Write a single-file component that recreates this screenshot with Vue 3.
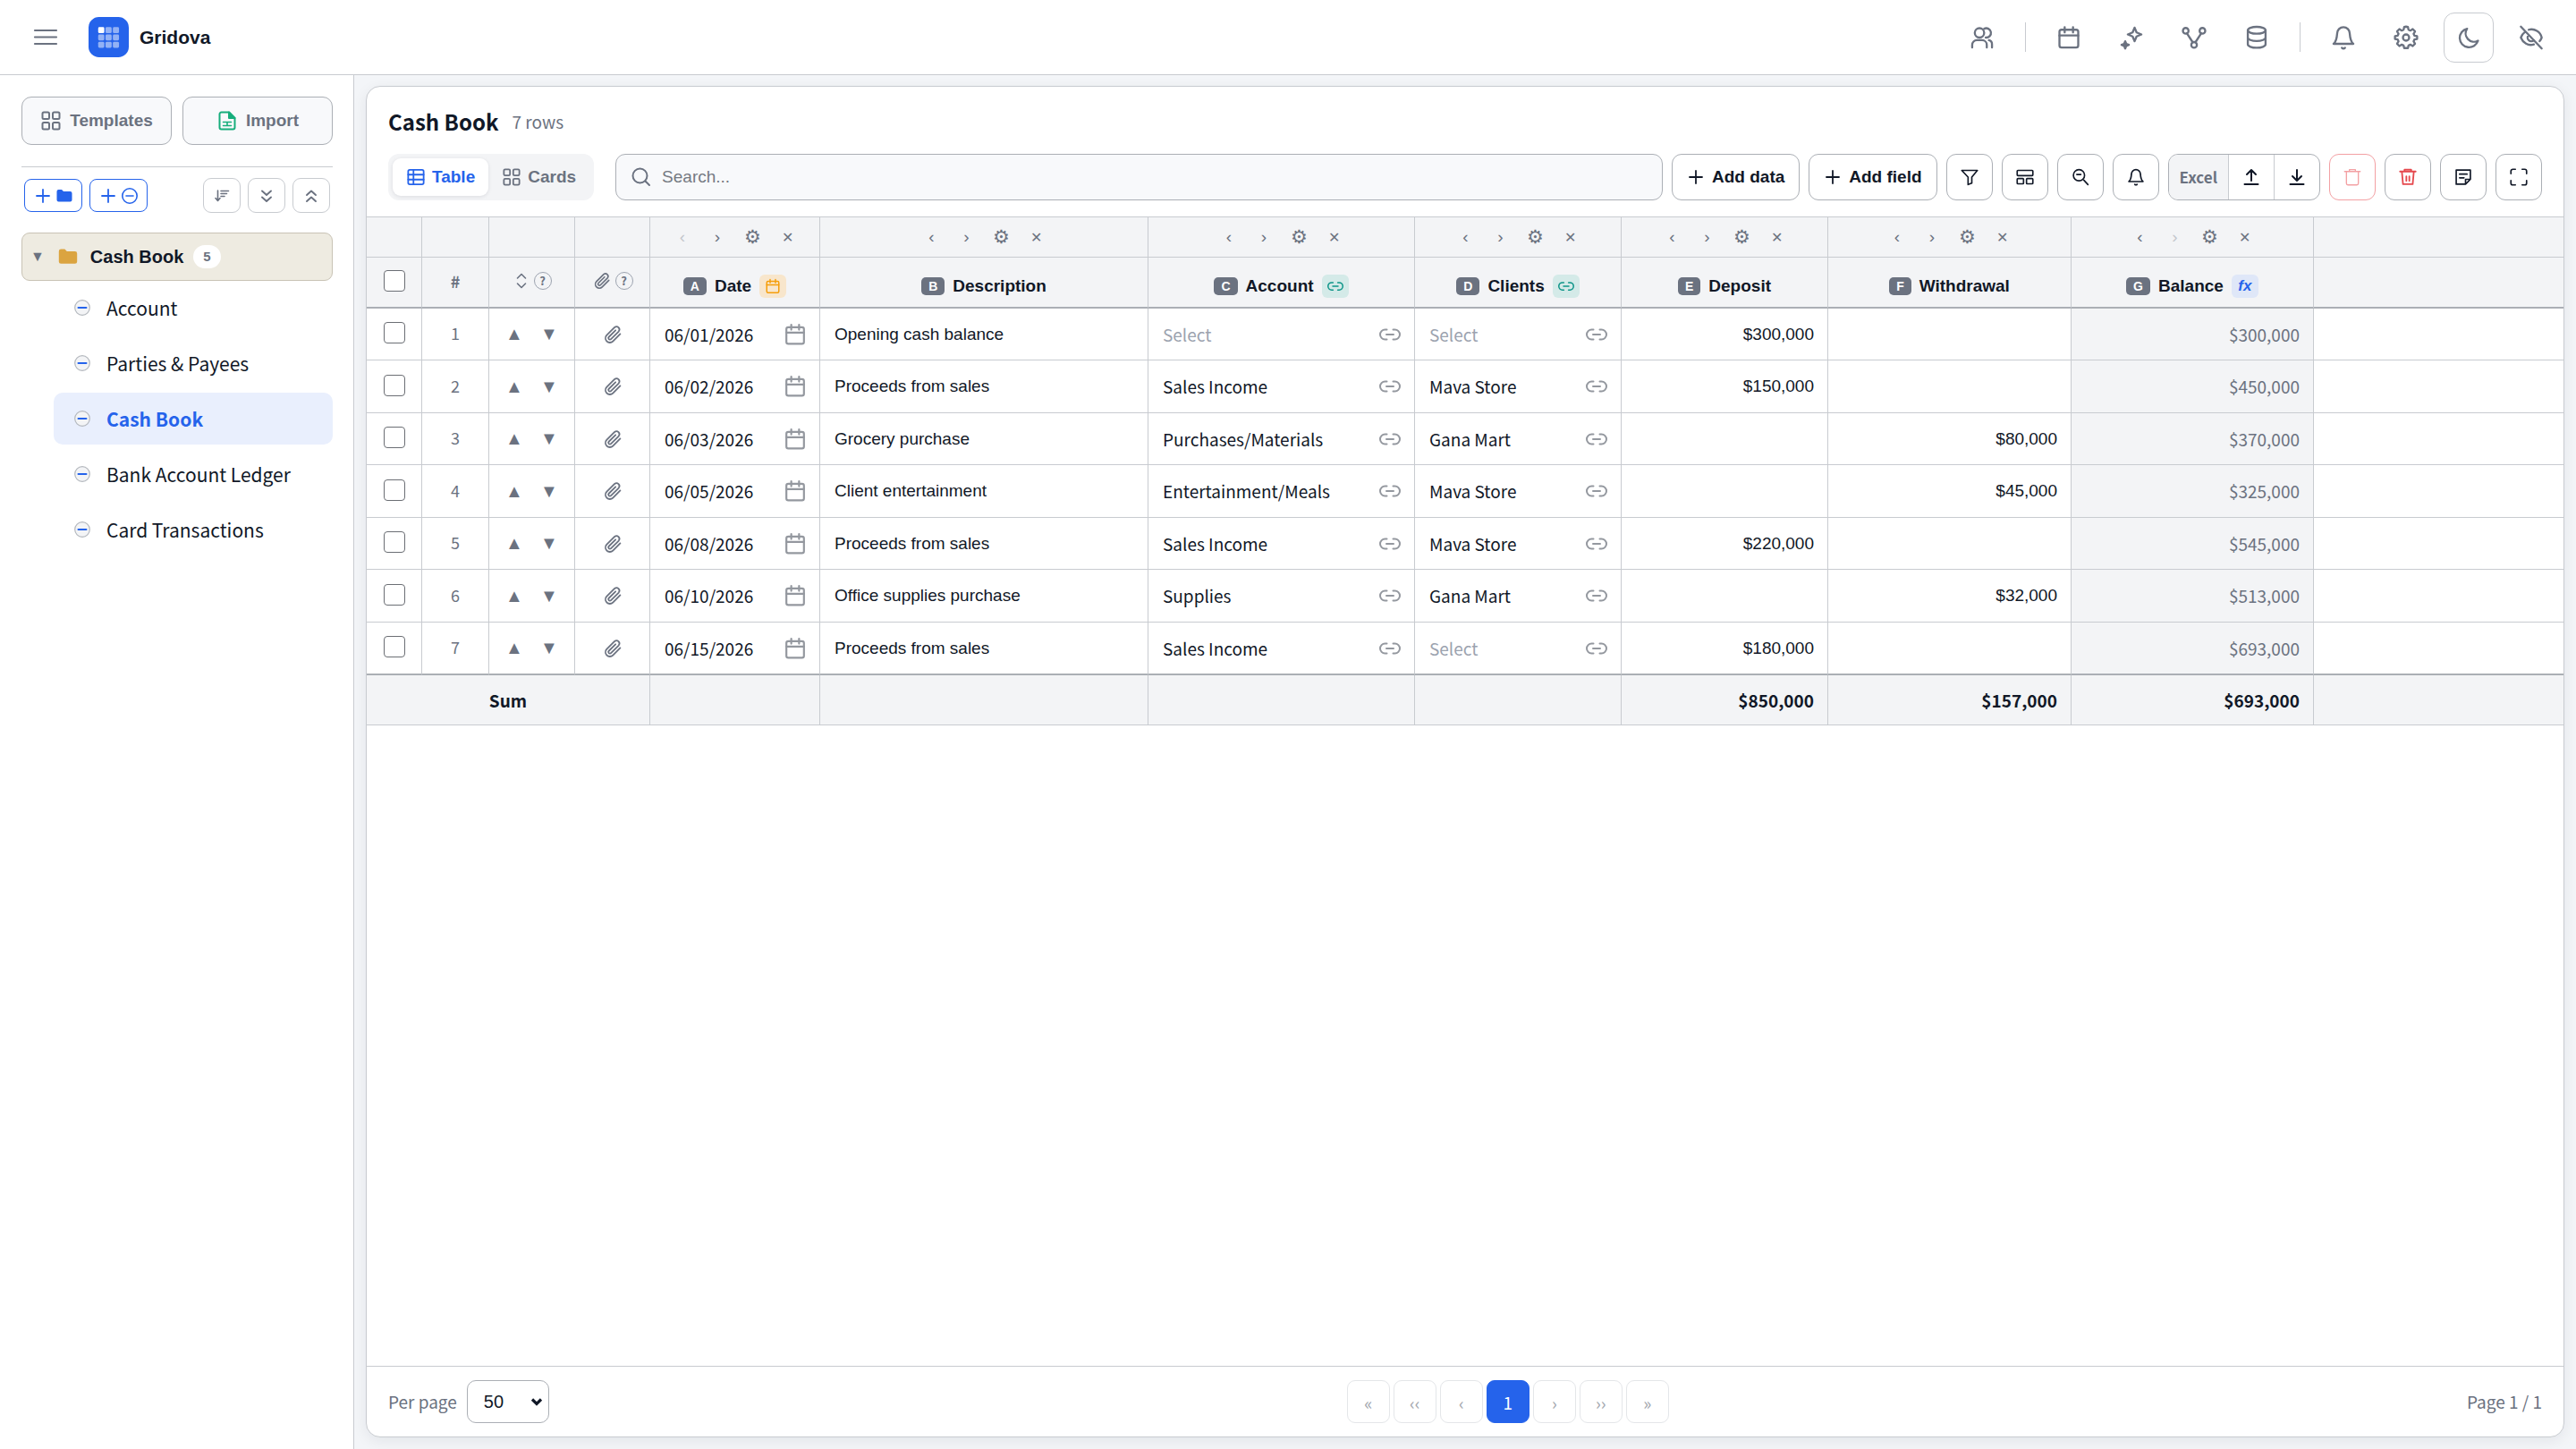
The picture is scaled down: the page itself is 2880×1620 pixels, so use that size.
<template>
  <div class="app">
    <header class="topbar">
      <button type="button" class="plain-btn" aria-label="Toggle menu">
        <svg class="ic-28" viewBox="0 0 28 28" v-html="icons.menu"></svg>
      </button>
      <a href="#" class="brand">
        <svg class="logo" viewBox="0 0 46 46" v-html="icons.logo"></svg>
        <span>Gridova</span>
      </a>
      <nav class="top-actions" aria-label="Tools">
        <template v-for="(tool, i) in topTools" :key="i">
          <span v-if="tool === '|'" class="top-divider"></span>
          <button v-else type="button" class="top-btn" :class="{ boxed: tool === 'moon' }" :aria-label="tool">
            <svg class="ic-28" viewBox="0 0 24 24" v-html="icons[tool]"></svg>
          </button>
        </template>
      </nav>
    </header>

    <div class="body">
      <aside class="sidebar">
        <div class="side-main">
          <button type="button" class="side-btn">
            <svg class="ic-24" viewBox="0 0 24 24" v-html="icons.grid"></svg>
            Templates
          </button>
          <button type="button" class="side-btn">
            <svg class="ic-24 green" viewBox="0 0 24 24" v-html="icons.file"></svg>
            Import
          </button>
        </div>

        <div class="side-tools">
          <button type="button" class="add-btn" aria-label="Add folder">
            <svg class="ic-20" viewBox="0 0 20 20" v-html="icons.plus"></svg>
            <svg class="ic-20" viewBox="0 0 20 20" v-html="icons.folder"></svg>
          </button>
          <button type="button" class="add-btn" aria-label="Add sheet">
            <svg class="ic-20" viewBox="0 0 20 20" v-html="icons.plus"></svg>
            <svg class="ic-20" viewBox="0 0 20 20" v-html="icons.minusCircle"></svg>
          </button>
          <span class="spacer"></span>
          <button v-for="name in ['sort', 'down', 'up']" :key="name" type="button" class="mini-btn" :aria-label="name">
            <svg class="ic-20" viewBox="0 0 20 20" v-html="icons[name]"></svg>
          </button>
        </div>

        <button type="button" class="folder-row">
          <span class="caret">▼</span>
          <svg class="folder-icon" viewBox="0 0 20 20" v-html="icons.folder"></svg>
          <span>Cash Book</span>
          <span class="count">5</span>
        </button>
        <ul class="sheet-list">
          <li v-for="sheet in sheets" :key="sheet">
            <a href="#" class="sheet" :class="{ active: sheet === activeSheet }" @click.prevent="activeSheet = sheet">
              <svg class="ic-20" viewBox="0 0 20 20" v-html="icons.sheetDot"></svg>
              {{ sheet }}
            </a>
          </li>
        </ul>
      </aside>

      <main class="main">
        <section class="card">
          <div class="card-head">
            <div class="title-row">
              <h1>Cash Book</h1>
              <span class="rows-count">{{ rows.length }} rows</span>
            </div>
            <div class="toolbar">
              <div class="view-toggle">
                <button type="button" class="view-btn active">
                  <svg class="ic-20" viewBox="1 1 22 22" v-html="icons.table"></svg>
                  Table
                </button>
                <button type="button" class="view-btn">
                  <svg class="ic-20" viewBox="1 1 22 22" v-html="icons.grid"></svg>
                  Cards
                </button>
              </div>
              <label class="search">
                <svg class="ic-24" viewBox="0 0 24 24" v-html="icons.search"></svg>
                <input v-model="query" type="text" placeholder="Search..." aria-label="Search">
              </label>
              <div class="tools">
                <button type="button" class="tool-btn wide">
                  <svg class="ic-20" viewBox="0 0 20 20" v-html="icons.plus"></svg>
                  Add data
                </button>
                <button type="button" class="tool-btn wide">
                  <svg class="ic-20" viewBox="0 0 20 20" v-html="icons.plus"></svg>
                  Add field
                </button>
                <button v-for="name in ['filter', 'layout', 'zoomOut', 'bell']" :key="name" type="button" class="tool-btn" :aria-label="name">
                  <svg class="ic-20" viewBox="0 0 24 24" v-html="icons[name]"></svg>
                </button>
                <div class="excel">
                  <span class="excel-label">Excel</span>
                  <button type="button" aria-label="Upload Excel">
                    <svg class="ic-24" viewBox="0 0 24 24" v-html="icons.upload"></svg>
                  </button>
                  <button type="button" aria-label="Download Excel">
                    <svg class="ic-24" viewBox="0 0 24 24" v-html="icons.download"></svg>
                  </button>
                </div>
                <button type="button" class="tool-btn danger" disabled aria-label="Delete rows">
                  <svg class="ic-20" viewBox="0 0 24 24" v-html="icons.trash"></svg>
                </button>
                <button type="button" class="tool-btn red" aria-label="Delete all">
                  <svg class="ic-20" viewBox="0 0 24 24" v-html="icons.trashFull"></svg>
                </button>
                <button v-for="name in ['note', 'fullscreen']" :key="name" type="button" class="tool-btn" :aria-label="name">
                  <svg class="ic-20" viewBox="0 0 24 24" v-html="icons[name]"></svg>
                </button>
              </div>
            </div>
          </div>

          <div class="table-wrap">
            <table class="grid">
              <colgroup>
                <col class="w-check">
                <col class="w-num">
                <col class="w-move">
                <col class="w-clip">
                <col v-for="col in columns" :key="col.key" :class="'w-' + col.key">
                <col>
              </colgroup>
              <thead>
                <tr class="controls-row">
                  <th></th>
                  <th></th>
                  <th></th>
                  <th></th>
                  <th v-for="(col, i) in columns" :key="col.key">
                    <div class="col-controls">
                      <button type="button" :disabled="i === 0" aria-label="Move left">‹</button>
                      <button type="button" :disabled="i === columns.length - 1" aria-label="Move right">›</button>
                      <button type="button" class="gear" aria-label="Column settings">⚙</button>
                      <button type="button" class="cross" aria-label="Remove column">✕</button>
                    </div>
                  </th>
                  <th></th>
                </tr>
                <tr class="names-row">
                  <th><input type="checkbox" class="check" aria-label="Select all"></th>
                  <th class="hash">#</th>
                  <th>
                    <div class="head-icons">
                      <svg class="ic-20" viewBox="0 0 20 20" v-html="icons.updown"></svg>
                      <span class="help">?</span>
                    </div>
                  </th>
                  <th>
                    <div class="head-icons">
                      <svg class="ic-22" viewBox="0 0 20 20" v-html="icons.clip"></svg>
                      <span class="help">?</span>
                    </div>
                  </th>
                  <th v-for="col in columns" :key="col.key">
                    <div class="col-name">
                      <span class="letter">{{ col.letter }}</span>
                      <span>{{ col.name }}</span>
                      <span v-if="col.chip" class="chip" :class="col.chip">
                        <template v-if="col.chip === 'fx'">fx</template>
                        <svg v-else class="ic-18" viewBox="0 0 24 24" v-html="icons[col.chip]"></svg>
                      </span>
                    </div>
                  </th>
                  <th></th>
                </tr>
              </thead>
              <tbody>
                <tr v-for="(row, i) in rows" :key="i">
                  <td class="center raised"><input type="checkbox" class="check" :aria-label="`Select row ${i + 1}`"></td>
                  <td class="center raised row-num">{{ i + 1 }}</td>
                  <td class="center">
                    <div class="move">
                      <button type="button" aria-label="Move up">▲</button>
                      <button type="button" aria-label="Move down">▼</button>
                    </div>
                  </td>
                  <td class="center">
                    <div class="attach">
                      <button type="button" aria-label="Attachments">
                        <svg class="ic-24" viewBox="0 0 20 20" v-html="icons.clip"></svg>
                      </button>
                    </div>
                  </td>
                  <td>
                    <div class="cell">
                      <span>{{ row.date }}</span>
                      <svg class="ic-24" viewBox="1 1 22 22" v-html="icons.calendar"></svg>
                    </div>
                  </td>
                  <td class="arial">{{ row.description }}</td>
                  <td v-for="key in ['account', 'client']" :key="key">
                    <div class="cell">
                      <span :class="{ empty: !row[key] }">{{ row[key] || 'Select' }}</span>
                      <svg class="ic-24" viewBox="0 0 24 24" v-html="icons.link"></svg>
                    </div>
                  </td>
                  <td class="arial right">{{ money(row.deposit) }}</td>
                  <td class="arial right">{{ money(row.withdrawal) }}</td>
                  <td class="right balance">{{ money(balances[i]) }}</td>
                  <td></td>
                </tr>
              </tbody>
              <tfoot>
                <tr>
                  <td colspan="4" class="center">Sum</td>
                  <td></td>
                  <td></td>
                  <td></td>
                  <td></td>
                  <td class="right">{{ money(totals.deposit) }}</td>
                  <td class="right">{{ money(totals.withdrawal) }}</td>
                  <td class="right">{{ money(totals.deposit - totals.withdrawal) }}</td>
                  <td></td>
                </tr>
              </tfoot>
            </table>
          </div>

          <footer class="card-foot">
            <div class="per-page">
              <label for="per-page">Per page</label>
              <div class="select-wrap">
                <select id="per-page" v-model="perPage">
                  <option>50</option>
                  <option>100</option>
                </select>
                <svg class="chevron" viewBox="0 0 14 14" v-html="icons.chevron"></svg>
              </div>
            </div>
            <nav class="pages" aria-label="Pagination">
              <button v-for="p in ['«', '‹‹', '‹', '1', '›', '››', '»']" :key="p" type="button" :class="{ current: p === '1' }" :disabled="p !== '1'">
                {{ p }}
              </button>
            </nav>
            <span>Page 1 / 1</span>
          </footer>
        </section>
      </main>
    </div>
  </div>
</template>

<script setup>
import { ref, computed } from 'vue'

const query = ref('')
const perPage = ref('50')
const activeSheet = ref('Cash Book')

const sheets = ['Account', 'Parties & Payees', 'Cash Book', 'Bank Account Ledger', 'Card Transactions']

const topTools = ['users', '|', 'calendar', 'sparkle', 'fork', 'database', '|', 'bell', 'gear', 'moon', 'eyeOff']

const columns = [
  { key: 'date', letter: 'A', name: 'Date', chip: 'calendar' },
  { key: 'description', letter: 'B', name: 'Description' },
  { key: 'account', letter: 'C', name: 'Account', chip: 'link' },
  { key: 'client', letter: 'D', name: 'Clients', chip: 'link' },
  { key: 'deposit', letter: 'E', name: 'Deposit' },
  { key: 'withdrawal', letter: 'F', name: 'Withdrawal' },
  { key: 'balance', letter: 'G', name: 'Balance', chip: 'fx' }
]

const rows = ref([
  { date: '06/01/2026', description: 'Opening cash balance', account: '', client: '', deposit: 300000 },
  { date: '06/02/2026', description: 'Proceeds from sales', account: 'Sales Income', client: 'Mava Store', deposit: 150000 },
  { date: '06/03/2026', description: 'Grocery purchase', account: 'Purchases/Materials', client: 'Gana Mart', withdrawal: 80000 },
  { date: '06/05/2026', description: 'Client entertainment', account: 'Entertainment/Meals', client: 'Mava Store', withdrawal: 45000 },
  { date: '06/08/2026', description: 'Proceeds from sales', account: 'Sales Income', client: 'Mava Store', deposit: 220000 },
  { date: '06/10/2026', description: 'Office supplies purchase', account: 'Supplies', client: 'Gana Mart', withdrawal: 32000 },
  { date: '06/15/2026', description: 'Proceeds from sales', account: 'Sales Income', client: '', deposit: 180000 }
])

// Running balance per row
const balances = computed(() => {
  let total = 0
  return rows.value.map(row => {
    total += (row.deposit || 0) - (row.withdrawal || 0)
    return total
  })
})

const totals = computed(() => ({
  deposit: rows.value.reduce((sum, row) => sum + (row.deposit || 0), 0),
  withdrawal: rows.value.reduce((sum, row) => sum + (row.withdrawal || 0), 0)
}))

const money = (value) => {
  if (!value) return ''
  return '$' + value.toLocaleString('en-US')
}

const logoCells = [0, 1, 2].flatMap(r => [0, 1, 2].map(c =>
  `<rect x="${11 + c * 8.4}" y="${11.5 + r * 8.4}" width="7" height="7" rx="1.5" fill="#fff" stroke="none" opacity="${r + c === 0 ? 1 : 0.5}"/>`
)).join('')

const icons = {
  menu: '<path d="M2 6h24M2 13.5h24M2 21h24" stroke-width="2.2"/>',
  logo: `<rect width="46" height="46" rx="12" fill="#2563eb" stroke="none"/>${logoCells}`,
  users: '<circle cx="9.5" cy="7.5" r="4.5"/><path d="M14 3.5a4.500 4.500 0 1 1 1.500 8.500"/><path d="M2.500 21.500v-2.500a4.500 4.500 0 0 1 4.500-4.500h5a4.500 4.500 0 0 1 4.500 4.500v2.500"/><path d="M18.500 14.500a4 4 0 0 1 3 4v3"/>',
  calendar: '<rect x="3" y="4.500" width="18" height="17" rx="2"/><path d="M3 10h18M8 2v5M16 2v5"/>',
  sparkle: '<path d="M15 2.500l1.900 4.600 4.600 1.900-4.600 1.900-1.900 4.600-1.900-4.600L8.500 9l4.600-1.900z"/><path d="M6 15.500l1 2.500 2.500 1-2.500 1-1 2.500-1-2.500-2.500-1 2.500-1z" fill="currentColor"/>',
  fork: '<circle cx="4" cy="5.500" r="2.700"/><circle cx="20" cy="5.500" r="2.700"/><circle cx="12" cy="19" r="2.700"/><path d="M5.200 8l5.500 8.500M18.800 8l-5.500 8.500"/>',
  database: '<ellipse cx="12" cy="5" rx="8.500" ry="3.300"/><path d="M3.500 5v13.500c0 1.800 3.800 3.300 8.500 3.300s8.500-1.500 8.500-3.300V5M3.500 12c0 1.800 3.800 3.300 8.500 3.300s8.500-1.500 8.500-3.300"/>',
  bell: '<path d="M2.500 18h19c-2-1.500-3-3.500-3.500-10a6 6 0 0 0-12 0c-.5 6.500-1.500 8.500-3.500 10z"/><path d="M10.500 21.800a2 2 0 0 0 3 0"/>',
  gear: '<circle cx="12" cy="12" r="3"/><path d="M12 1.500l1.800.4.600 2.600 1.700.8 2.300-1.400 2.200 2.200-1.400 2.300.8 1.700 2.600.6v2.600l-2.600.6-.8 1.700 1.400 2.300-2.200 2.200-2.300-1.400-1.700.8-.6 2.600h-3.600l-.6-2.600-1.700-.8-2.300 1.400-2.200-2.200 1.400-2.300-.8-1.700-2.600-.6v-2.600l2.600-.6.8-1.700-1.400-2.300 2.200-2.200 2.300 1.400 1.700-.8.600-2.600z"/>',
  moon: '<path d="M10.500 3.500a9 9 0 1 0 10.500 11.500 8 8 0 0 1-10.500-11.500z"/>',
  eyeOff: '<path d="M2 1.500l20 21M9.500 4.500a10 10 0 0 1 12.500 7.500 12 12 0 0 1-2 3.500M6 6.500A12 12 0 0 0 2 12c2 5 7 8.500 12.500 6.500M9.500 9.500a3.500 3.500 0 0 0 5 5"/>',
  grid: '<rect x="2.500" y="2.500" width="7.500" height="7.500" rx="1.500"/><rect x="14" y="2.500" width="7.500" height="7.500" rx="1.500"/><rect x="2.500" y="14" width="7.500" height="7.500" rx="1.500"/><rect x="14" y="14" width="7.500" height="7.500" rx="1.500"/>',
  table: '<rect x="2.500" y="3" width="19" height="18" rx="2"/><path d="M2.500 9h19M2.500 15h19M9 3v18"/>',
  file: '<path d="M14 2.500H5.500a2 2 0 0 0-2 2v15a2 2 0 0 0 2 2h13a2 2 0 0 0 2-2V9z" stroke-width="2"/><path d="M14 2.500V9h6.500z" fill="currentColor"/><path d="M7.500 13.500h9M7.500 17.500h9M12 13.500v4" stroke-width="1.600"/>',
  plus: '<path d="M10 3v14M3 10h14" stroke-width="1.800"/>',
  folder: '<path d="M1.500 5a2 2 0 0 1 2-2h3.500l2 2h7.500a2 2 0 0 1 2 2v7.500a2 2 0 0 1-2 2h-13a2 2 0 0 1-2-2z" fill="currentColor" stroke="none"/>',
  minusCircle: '<circle cx="10" cy="10" r="8.200" stroke-width="1.600"/><path d="M6 10h8" stroke-width="1.600"/>',
  sheetDot: '<circle cx="10" cy="10" r="8.300" fill="#f3f4f6" stroke="#b4b8be" stroke-width="1.200"/><path d="M5.500 10h9" stroke="#2563eb" stroke-width="2"/>',
  sort: '<path d="M5.500 4v11M3 12.500L5.500 15.500 8 12.500M9 4.500h8.500M9 7.500h6.500M9 10.500h4" stroke-width="1.600"/>',
  down: '<path d="M5 4.500l5 4.500 5-4.500M5 11.500l5 4.500 5-4.500" stroke-width="1.900"/>',
  up: '<path d="M5 9l5-4.500 5 4.500M5 16l5-4.500 5 4.500" stroke-width="1.900"/>',
  updown: '<path d="M5.500 7l4.500-4.500 4.500 4.500M5.500 13l4.500 4.500 4.500-4.500" stroke-width="1.600"/>',
  clip: '<path d="M17 9.500l-6.800 6.800a4 4 0 0 1-5.700-5.700l7.300-7.300a2.700 2.700 0 0 1 3.800 3.800l-7.200 7.200a1.400 1.400 0 0 1-2-2l6.200-6.200" stroke-width="1.500"/>',
  search: '<circle cx="10.500" cy="10.500" r="8"/><path d="M16.500 16.500l4.500 4.500"/>',
  filter: '<path d="M1.500 3h21l-7.500 9v8l-5 2V12z"/>',
  layout: '<rect x="1.500" y="3" width="21" height="7" rx="1"/><rect x="1.500" y="14" width="8.500" height="7" rx="1"/><rect x="14" y="14" width="8.500" height="7" rx="1"/>',
  zoomOut: '<circle cx="10" cy="9.500" r="7.500"/><path d="M7 8.500h5.500M16.500 16l5.500 6"/>',
  upload: '<path d="M4.500 20h15M12 16V4M7 9l5-5 5 5"/>',
  download: '<path d="M4.500 20h15M12 4v12M7 11l5 5 5-5"/>',
  trash: '<path d="M4 6v14.500a2 2 0 0 0 2 2h12a2 2 0 0 0 2-2V6M1.500 4.500h21M8 4V2h8v2" stroke-width="1.600"/>',
  trashFull: '<path d="M4 4.500l1.500 17h13L20 4.500M1.500 4.500h21M7.500 4V2h9v2M10 11v6M14 11v6" stroke-width="2.200"/>',
  note: '<path d="M2.500 2.500h19v12.500l-6.500 6.500h-12.500zM15 21.500v-6.500h6.500M7 8h10M7 13h6"/>',
  fullscreen: '<path d="M1.500 7.500V4a2.500 2.500 0 0 1 2.500-2.500H7.500M16.500 1.500H20a2.500 2.500 0 0 1 2.500 2.500V7.500M22.500 16.500v3.500a2.500 2.500 0 0 1-2.500 2.500H16.500M7.500 22.500H4a2.500 2.500 0 0 1-2.500-2.500V16.500"/>',
  link: '<path d="M8.500 6.500h-2a5.500 5.500 0 0 0 0 11h2M15.500 6.500h2a5.500 5.500 0 0 1 0 11h-2M8 12h8"/>',
  chevron: '<path d="M2 4.500l5 5 5-5" stroke-width="3.200"/>'
}
</script>

<style>
body {
  background: #f3f5f8;
}
</style>

<style scoped>
.app {
  display: flex;
  flex-direction: column;
  min-height: 100vh;
  font-family: "Noto Sans CJK SC", "Noto Sans", sans-serif;
  font-size: 19px;
  line-height: 28px;
  color: #111827;
}

button,
input,
select {
  font-family: "Liberation Sans", Arial, sans-serif;
  color: inherit;
}

button {
  display: inline-flex;
  align-items: center;
  justify-content: center;
  padding: 0;
  border: none;
  background: none;
  cursor: pointer;
}

a {
  color: inherit;
  text-decoration: none;
}

svg {
  display: block;
  flex: none;
  fill: none;
  stroke: currentColor;
  stroke-width: 2;
  stroke-linecap: round;
  stroke-linejoin: round;
}

.ic-18 { width: 18px; height: 18px; }
.ic-20 { width: 20px; height: 20px; }
.ic-22 { width: 22px; height: 22px; }
.ic-24 { width: 24px; height: 24px; }
.ic-28 { width: 28px; height: 28px; }

/* Top bar */
.topbar {
  display: flex;
  align-items: center;
  height: 84px;
  box-sizing: border-box;
  padding: 0 22px 0 37px;
  background: #fff;
  border-bottom: 1px solid #c8cbd0;
}

.plain-btn {
  color: #6b7280;
}

.brand {
  display: flex;
  align-items: center;
  gap: 12px;
  margin-left: 34px;
  font-family: "Liberation Sans", Arial, sans-serif;
  font-size: 21px;
  font-weight: 700;
}

.logo {
  width: 45px;
  height: 45px;
}

.top-actions {
  display: flex;
  align-items: center;
  gap: 14px;
  margin-left: auto;
}

.top-btn {
  width: 56px;
  height: 56px;
  box-sizing: border-box;
  border-radius: 12px;
  color: #6b7280;
}

.top-btn.boxed {
  border: 1px solid #c8cbd0;
}

.top-divider {
  width: 1px;
  height: 33px;
  margin: 0 6px;
  background: #c8cbd0;
}

.body {
  display: flex;
  flex: 1;
}

/* Sidebar */
.sidebar {
  width: 396px;
  box-sizing: border-box;
  padding: 24px 23px 24px 24px;
  background: #fff;
  border-right: 1px solid #c8cbd0;
}

.side-main {
  display: grid;
  grid-template-columns: 1fr 1fr;
  gap: 12px;
  padding-bottom: 24px;
  border-bottom: 1px solid #c8cbd0;
}

.side-btn {
  gap: 9px;
  height: 54px;
  border: 1px solid #abafb5;
  border-radius: 11px;
  background: #f8f9fb;
  color: #6b7280;
  font-size: 19px;
  font-weight: 700;
}

.green {
  color: #17ae7c;
}

.side-tools {
  display: flex;
  align-items: center;
  gap: 8px;
  padding: 12px 3px 0;
}

.spacer {
  flex: 1;
}

.add-btn {
  gap: 4px;
  width: 65px;
  height: 37px;
  border: 1px solid #2563eb;
  border-radius: 8px;
  color: #2563eb;
}

.mini-btn {
  width: 42px;
  height: 39px;
  border: 1px solid #c8cbd0;
  border-radius: 9px;
  color: #6b7280;
}

.folder-row {
  justify-content: flex-start;
  width: 100%;
  height: 54px;
  margin-top: 22px;
  padding: 0 9px;
  border: 1px solid #c9c3b5;
  border-radius: 9px;
  background: #eeebe1;
  font-size: 20px;
  font-weight: 700;
}

.caret {
  font-size: 16px;
  color: #6b7280;
}

.folder-icon {
  width: 24px;
  height: 24px;
  margin: 0 13px 0 14px;
  color: #dba440;
}

.count {
  margin-left: 11px;
  padding: 0 11px;
  border-radius: 13px;
  background: #fff;
  color: #6b7280;
  font-size: 15px;
  line-height: 26px;
}

.sheet-list {
  display: flex;
  flex-direction: column;
  gap: 4px;
  margin: 1px 0 0 36px;
  padding: 0;
  list-style: none;
}

.sheet {
  display: flex;
  align-items: center;
  gap: 17px;
  height: 58px;
  padding: 0 22px;
  border-radius: 10px;
  font-size: 21px;
}

.sheet.active {
  background: #e9effd;
  color: #2563eb;
  font-weight: 700;
}

/* Card */
.main {
  display: flex;
  flex: 1;
  min-width: 0;
  padding: 12px 13px 13px;
}

.card {
  display: flex;
  flex-direction: column;
  flex: 1;
  min-width: 0;
  border: 1px solid #c8cbd0;
  border-radius: 16px;
  background: #fff;
  box-shadow: 0 4px 16px rgba(15, 23, 42, 0.07);
  overflow: hidden;
}

.card-head {
  padding: 21px 24px 18px;
  border-bottom: 1px solid #c8cbd0;
}

.title-row {
  display: flex;
  align-items: center;
  gap: 15px;
  line-height: 36px;
}

h1 {
  margin: 0;
  font-size: 24px;
}

.rows-count {
  color: #6b7280;
}

.toolbar {
  display: flex;
  align-items: center;
  margin-top: 18px;
}

.view-toggle {
  display: flex;
  padding: 5px;
  border-radius: 12px;
  background: #f3f4f6;
}

.view-btn {
  gap: 8px;
  height: 42px;
  padding: 0 15px 0 16px;
  border-radius: 9px;
  color: #6b7280;
  font-size: 19px;
  font-weight: 700;
}

.view-btn.active {
  background: #fff;
  color: #2563eb;
  box-shadow: 0 1px 4px rgba(15, 23, 42, 0.1);
}

.search {
  display: flex;
  align-items: center;
  flex: 1;
  gap: 11px;
  height: 52px;
  box-sizing: border-box;
  margin: 0 10px 0 24px;
  padding: 0 16px;
  border: 1px solid #abafb5;
  border-radius: 11px;
  background: #f8f9fb;
  color: #6b7280;
}

.search input {
  flex: 1;
  padding: 0;
  border: none;
  outline: none;
  background: none;
  font-size: 19px;
}

.search input::placeholder {
  color: #757982;
}

.tools {
  display: flex;
  gap: 10px;
}

.tool-btn {
  width: 52px;
  height: 52px;
  box-sizing: border-box;
  border: 1px solid #abafb5;
  border-radius: 11px;
  background: #fff;
  font-size: 19px;
  font-weight: 700;
}

.tool-btn.wide {
  gap: 8px;
  width: auto;
  padding: 0 16px;
}

.tool-btn.danger {
  border-color: #f3a0a3;
  color: #f3a0a3;
}

.tool-btn.red {
  color: #e5484d;
}

.excel {
  display: flex;
  height: 52px;
  box-sizing: border-box;
  border: 1px solid #abafb5;
  border-radius: 11px;
  overflow: hidden;
}

.excel-label {
  padding: 0 12px;
  background: #f3f4f6;
  color: #6b7280;
  font-size: 17px;
  font-weight: 700;
  line-height: 50px;
}

.excel button {
  width: 51px;
  border-left: 1px solid #c8cbd0;
}

/* Table */
.table-wrap {
  flex: 1;
}

.grid {
  width: 100%;
  table-layout: fixed;
  border-collapse: separate;
  border-spacing: 0;
}

.w-check { width: 62px; }
.w-num { width: 75px; }
.w-move { width: 96px; }
.w-clip { width: 84px; }
.w-date { width: 190px; }
.w-description { width: 367px; }
.w-account { width: 298px; }
.w-client { width: 231px; }
.w-deposit { width: 231px; }
.w-withdrawal { width: 272px; }
.w-balance { width: 271px; }

th,
td {
  box-sizing: border-box;
  padding: 0 15px 0 16px;
  border-right: 1px solid #c8cbd0;
  border-bottom: 1px solid #c8cbd0;
  text-align: left;
  white-space: nowrap;
}

th {
  padding: 0;
  background: #f3f4f6;
  text-align: center;
}

th:last-child,
td:last-child {
  border-right: none;
}

.controls-row th {
  height: 45px;
}

.names-row th {
  height: 57px;
  padding-bottom: 4px;
  border-bottom: 2px solid #abafb5;
}

tbody td {
  height: 58px;
}

tbody tr:nth-child(even) td {
  height: 59px;
}

tbody tr:last-child td {
  height: 59px;
  border-bottom: 2px solid #abafb5;
}

tfoot td {
  height: 56px;
  background: #f3f4f6;
  font-weight: 700;
}

.center {
  padding: 0;
  text-align: center;
}

.raised {
  padding-bottom: 3px;
}

.right {
  text-align: right;
}

.arial {
  font-family: "Liberation Sans", Arial, sans-serif;
}

.balance {
  background: #f3f4f6;
  color: #6b7280;
}

.col-controls {
  display: flex;
  justify-content: center;
}

.col-controls button {
  width: 39px;
  height: 28px;
  color: #6b7280;
  font-size: 19px;
}

.col-controls button:disabled {
  opacity: 0.35;
}

.col-controls .gear {
  font-size: 21px;
}

.col-controls .cross {
  font-size: 16px;
}

.check {
  appearance: none;
  display: block;
  width: 24px;
  height: 24px;
  margin: 0 auto;
  border: 1px solid #6b6e74;
  border-radius: 4px;
  background: #fff;
}

.hash,
.row-num {
  color: #6b7280;
  font-size: 18px;
}

.head-icons {
  display: flex;
  align-items: center;
  justify-content: center;
  gap: 4px;
  color: #6b7280;
}

.help {
  width: 20px;
  height: 20px;
  box-sizing: border-box;
  border: 1px solid #9ca3af;
  border-radius: 50%;
  font-size: 13px;
  line-height: 18px;
  font-weight: 700;
}

.col-name {
  display: flex;
  align-items: center;
  justify-content: center;
  gap: 9px;
  padding-top: 12px;
  font-family: "Liberation Sans", Arial, sans-serif;
}

.letter {
  padding: 0 8px;
  border-radius: 5px;
  background: #6b7280;
  color: #fff;
  font-size: 14px;
  line-height: 20px;
}

.chip {
  display: flex;
  align-items: center;
  justify-content: center;
  width: 30px;
  height: 26px;
  border-radius: 6px;
  font-size: 17px;
}

.chip.calendar {
  background: #f8e6cc;
  color: #f59e0b;
}

.chip.link {
  background: #d4eae8;
  color: #0d9488;
}

.chip.fx {
  background: #dfe7f8;
  color: #2563eb;
  font-style: italic;
}

.move,
.attach {
  display: flex;
  justify-content: center;
}

.move button {
  width: 39px;
  color: #6b7280;
  font-size: 20px;
}

.attach button {
  color: #6b7280;
}

.cell {
  display: flex;
  align-items: center;
  justify-content: space-between;
}

.cell svg {
  color: #94989f;
}

.empty {
  color: #9ca3af;
}

/* Footer */
.card-foot {
  display: flex;
  align-items: center;
  justify-content: space-between;
  height: 78px;
  padding: 0 24px;
  border-top: 1px solid #c8cbd0;
  color: #6b7280;
}

.per-page {
  display: flex;
  align-items: center;
  gap: 11px;
}

.select-wrap {
  display: grid;
  align-items: center;
}

.select-wrap > * {
  grid-area: 1 / 1;
}

select {
  appearance: none;
  height: 48px;
  width: 92px;
  padding: 0 18px;
  border: 1px solid #abafb5;
  border-radius: 10px;
  background: #fff;
  color: #111827;
  font-size: 20px;
}

.chevron {
  justify-self: end;
  width: 14px;
  height: 14px;
  margin-right: 7px;
  color: #111827;
  stroke-linecap: butt;
  stroke-linejoin: miter;
  pointer-events: none;
}

.pages {
  display: flex;
  gap: 4px;
}

.pages button {
  width: 48px;
  height: 48px;
  border: 1px solid #e4e6e9;
  border-radius: 9px;
  font-family: inherit;
  font-size: 19px;
}

.pages button:disabled {
  color: #a3a7ae;
}

.pages .current {
  border-color: #2563eb;
  background: #2563eb;
  color: #fff;
}
</style>
